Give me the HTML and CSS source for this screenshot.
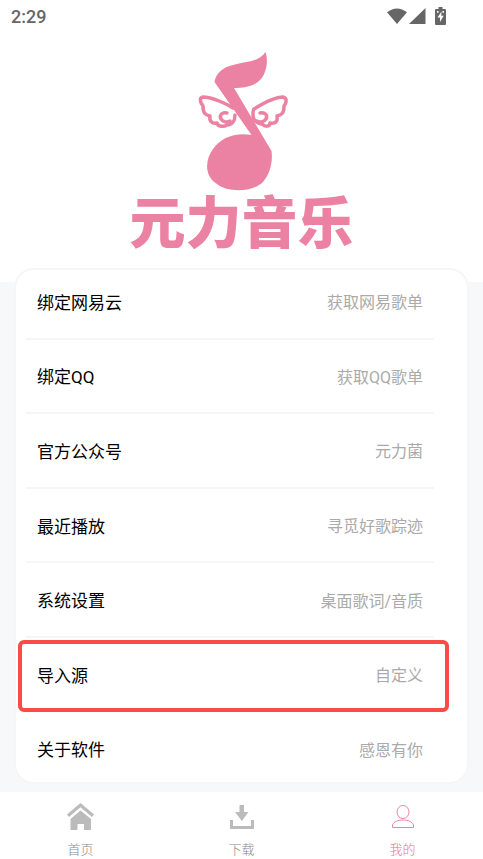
FILE: index.html
```
<!DOCTYPE html>
<html lang="zh-CN">
<head>
    <meta charset="UTF-8">
    <meta name="viewport" content="width=device-width, initial-scale=1.0">
    <title>元力音乐</title>
    <link rel="stylesheet" href="styles.css">
</head>
<body>
    <!-- Logo header -->
    <header class="hero">
        <div class="status-bar">
            <span class="time">2:29</span>
            <div class="status-icons">
                <svg width="20" height="16" viewBox="0 0 20 16"><path d="M0 4.200Q10-3.400 20 4.200L10 16Z"/></svg>
                <svg width="17" height="16" viewBox="0 0 17 16"><path d="M0 16L16.500 0V16Z"/></svg>
                <svg class="battery" width="11" height="18" viewBox="0 0 11 18">
                    <path d="M3.500 0h4v2H10q1 0 1 1v14q0 1-1 1H1q-1 0-1-1V3q0-1 1-1h2.500Z"/>
                    <path class="bolt" d="M6.500 4.500L2.500 10.500H5V15L8.700 8.700H6.300ZM2 4h1.500v1.700H2ZM7.500 4H9v1.700H7.500Z"/>
                </svg>
            </div>
        </div>
        <svg class="logo" width="92" height="140" viewBox="194 51 92 140">
            <path d="M263.500 52C266.500 61 264.500 72 259 79C253 86 243 88 232 88L269.500 151C271 162 268 174 261 182C251 192 226 193 215 184C202 176 203 160 211 149C219 137 234 132 249.500 135L212.500 82C214 73 221 67 231 65C243 61 256 63 263.500 52Z"/>
            <g class="wing">
                <path d="M231 108C225 104 210 97 201 97C197 98 198 102 201 106C201 113 203 115 208 116C207 121 210 124 215 123C216 127 222 127 225 125C230 125 233 121 233 115"/>
                <path d="M225 113C220 112 217 115 219 119C221 122 225 123 228 121"/>
                <path d="M252 109C260 104 273 97 281 97C285 98 285 102 282 106C282 113 280 115 275 116C276 121 274 124 268 123C268 127 263 127 260 124C255 124 251 120 251 115C251 112 251 110 252 109"/>
                <path d="M258 113C263 112 266 115 264 119C262 122 258 123 255 121"/>
            </g>
        </svg>
        <h1>元力音乐</h1>
    </header>

    <!-- Settings list -->
    <main class="card">
        <ul class="menu">
            <li><a href="#netease"><span>绑定网易云</span><span class="value">获取网易歌单</span></a></li>
            <li><a href="#qq"><span>绑定QQ</span><span class="value">获取QQ歌单</span></a></li>
            <li><a href="#official"><span>官方公众号</span><span class="value">元力菌</span></a></li>
            <li><a href="#recent"><span>最近播放</span><span class="value">寻觅好歌踪迹</span></a></li>
            <li><a href="#settings"><span>系统设置</span><span class="value">桌面歌词/音质</span></a></li>
            <li class="highlight"><a href="#import"><span>导入源</span><span class="value">自定义</span></a></li>
            <li><a href="#about"><span>关于软件</span><span class="value">感恩有你</span></a></li>
        </ul>
    </main>

    <!-- Bottom tabs -->
    <nav class="tabs">
        <a href="#home">
            <svg width="28" height="28" viewBox="0 0 28 28"><path d="M13.500 0L27 11.500L25 14L13.500 4.200L2 14L0 11.500ZM13.500 7.500L24 16V27H17V21H10.500V27H3.500V16Z"/></svg>
            <span>首页</span>
        </a>
        <a href="#download">
            <svg width="28" height="28" viewBox="0 0 28 28"><path d="M11.500 2h4.500v7h4.500l-6.700 9-6.800-9h4.500ZM2 17h3v6h18v-6h3v9H2Z"/></svg>
            <span>下载</span>
        </a>
        <a class="active" href="#mine">
            <svg width="28" height="28" viewBox="0 0 28 28"><ellipse cx="14" cy="9" rx="6" ry="6.500"/><path d="M3.500 24.500V22C5 18.500 9 17 14 17S23 18.500 24.500 22V24.500Z"/></svg>
            <span>我的</span>
        </a>
    </nav>
</body>
</html>
```
FILE: styles.css
```
* {
    box-sizing: border-box;
}

body {
    margin: 0;
    min-height: 100vh;
    display: flex;
    flex-direction: column;
    background: #f7f8fa;
    color: #000;
    font-family: Roboto, "Noto Sans CJK SC", sans-serif;
}

a {
    color: inherit;
    text-decoration: none;
}

svg {
    display: block;
    flex-shrink: 0;
}

/* Logo header */
.hero {
    display: flex;
    flex-direction: column;
    align-items: center;
    background: #fff;
    padding-bottom: 36px;
}

.status-bar {
    align-self: stretch;
    display: flex;
    justify-content: space-between;
    align-items: center;
    height: 32px;
    padding: 0 37px 0 11px;
    color: #666;
}

.time {
    font-size: 18px;
    font-weight: 500;
}

.status-icons {
    display: flex;
    align-items: center;
    gap: 2px;
    fill: #666;
}

.battery {
    margin-left: 7px;
}

.bolt {
    fill: #fff;
}

.logo {
    margin-top: 19px;
    fill: #ec82a3;
    overflow: visible;
}

.wing {
    fill: none;
    stroke: #ec82a3;
    stroke-width: 3.5;
    stroke-linecap: round;
    stroke-linejoin: round;
}

h1 {
    margin: 0;
    color: #ec82a3;
    font-family: "Noto Sans CJK SC", sans-serif;
    font-size: 56px;
    font-weight: 900;
    line-height: 55px;
}

/* Settings list */
.card {
    flex: 1;
    display: flex;
    margin: -14px 14px 8px;
    border: 2px solid #f6f6f7;
    border-radius: 20px;
    background: #fff;
}

.menu {
    flex: 1;
    display: flex;
    flex-direction: column;
    margin: -5px 33px -3px 10px;
    padding: 0;
    list-style: none;
}

.menu li {
    flex: 1;
    display: flex;
    position: relative;
    border-bottom: 2px solid #f6f6f7;
}

.menu li:last-child {
    border-bottom: 0;
}

.menu a {
    flex: 1;
    display: flex;
    justify-content: space-between;
    align-items: center;
    padding: 0 11px;
    font-size: 17px;
}

.menu .value {
    color: #aaa;
    font-size: 16px;
}

.highlight::after {
    content: "";
    position: absolute;
    inset: 2px -15px -2px -8px;
    border: 4px solid #f94b48;
    border-radius: 6px;
    pointer-events: none;
}

/* Bottom tabs */
.tabs {
    display: flex;
    height: 67px;
    background: #fff;
}

.tabs a {
    flex: 1;
    display: flex;
    flex-direction: column;
    align-items: center;
    gap: 10px;
    padding-top: 11px;
    color: #888;
    font-size: 13px;
    font-weight: 300;
    line-height: 18px;
}

.tabs svg {
    fill: #bbb;
}

.tabs .active {
    color: #ec6f98;
}

.active svg {
    fill: none;
    stroke: #ec82a3;
}
```
